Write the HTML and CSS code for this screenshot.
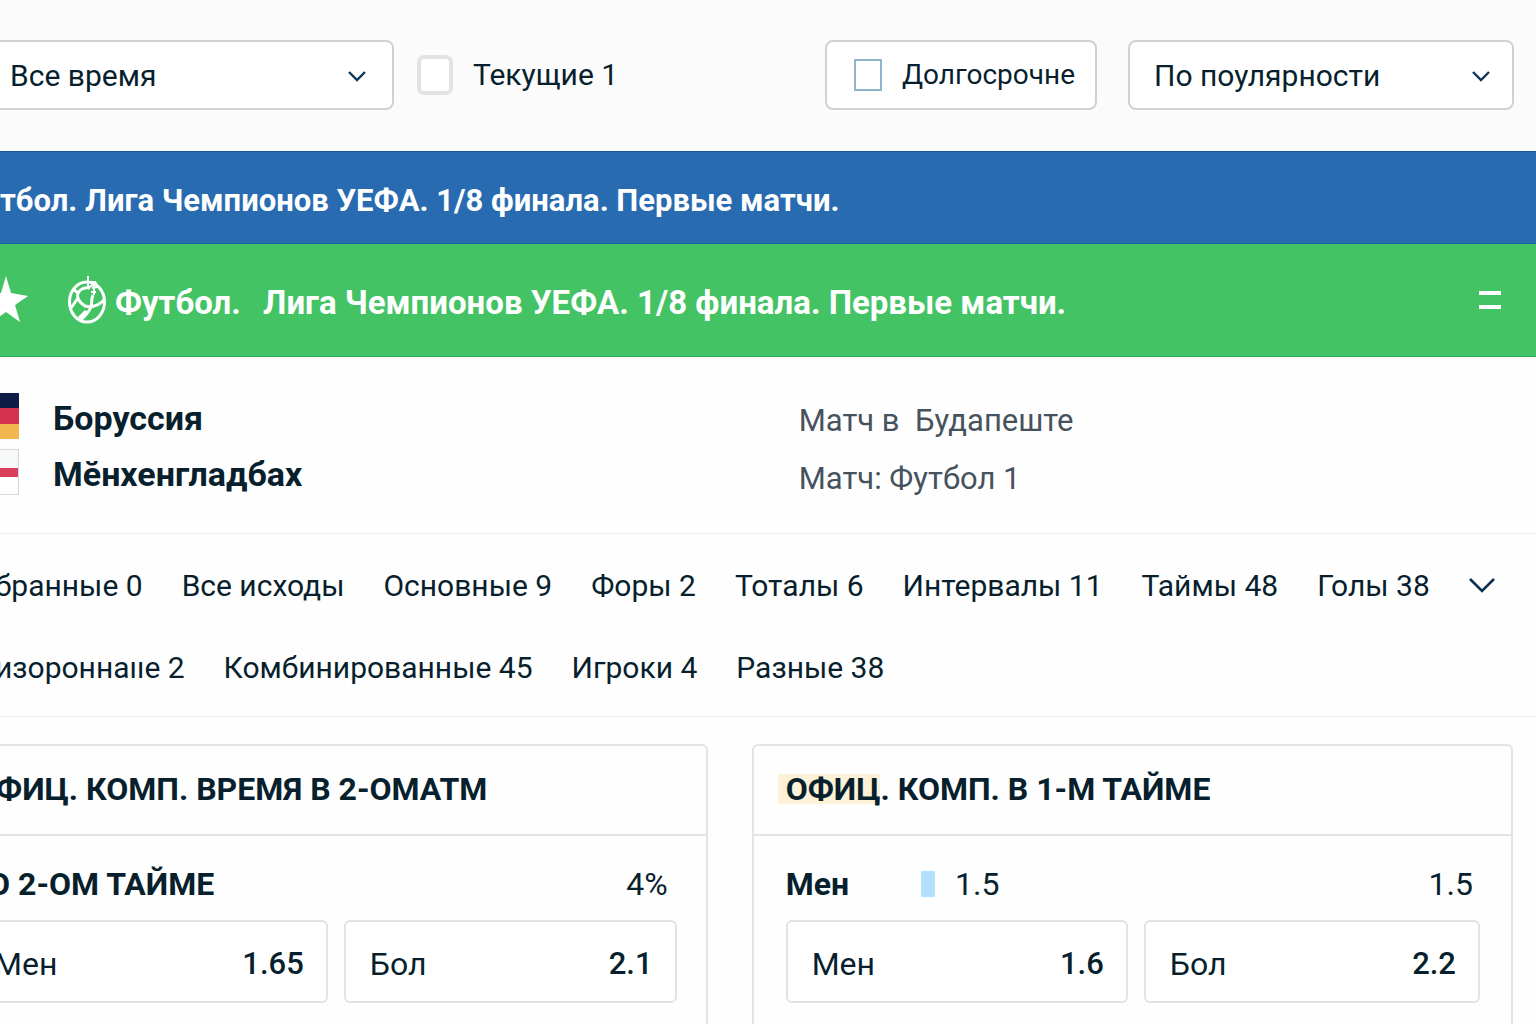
FILE: index.html
```html
<!DOCTYPE html>
<html lang="ru">
<head>
    <meta charset="UTF-8">
    <meta name="viewport" content="width=device-width, initial-scale=1.0">
    <title>Лига Чемпионов УЕФА</title>
    <link rel="stylesheet" href="styles.css">
</head>
<body>
    <form class="filters">
        <div class="select-box select-time">
            <select aria-label="Время">
                <option>Все время</option>
            </select>
            <svg class="chevron" viewBox="0 0 18 12"><path d="M1 2l8 8 8-8"/></svg>
        </div>
        <label class="check">
            <input type="checkbox">
            <span>Текущие 1</span>
        </label>
        <label class="check check-boxed">
            <input type="checkbox">
            <span>Долгосрочне</span>
        </label>
        <div class="select-box select-sort">
            <select aria-label="Сортировка">
                <option>По поулярности</option>
            </select>
            <svg class="chevron" viewBox="0 0 18 12"><path d="M1 2l8 8 8-8"/></svg>
        </div>
    </form>

    <div class="bar bar-blue">
        <h1>тбол. Лига Чемпионов УЕФА. 1/8 финала. Первые матчи.</h1>
    </div>

    <div class="bar bar-green">
        <button class="icon-button" aria-label="В избранное">
            <svg class="star" viewBox="0 0 28 48"><path d="M6 0L11 17L28 20L15 29L20 46L6 36L-8 46L-3 29L-16 20L1 17Z"/></svg>
        </button>
        <svg class="ball" viewBox="0 0 40 48">
            <ellipse cx="20" cy="26" rx="17.5" ry="20"/>
            <path d="M6 13L11 17M11 17C13 13 18 11 23 12M11 17C9 22 12 26 18 30C25 32 32 29 37 24M11 22L4 32M26 19C24 23 25 27 24 31C22 36 18 40 14 44M19 35L12 42"/>
            <path class="leaf" d="M21 0V11M17 6H29M22 11L30 7M25 12L30 11M27 10V19M24 16H29"/>
        </svg>
        <h2><span>Футбол.</span> <span>Лига Чемпионов УЕФА. 1/8 финала. Первые матчи.</span></h2>
        <button class="icon-button menu" aria-label="Меню">
            <svg viewBox="0 0 24 20"><path d="M1 3H23M1 17H23"/></svg>
        </button>
    </div>

    <section class="match">
        <div class="teams">
            <div class="team">
                <span class="flag flag-de"></span>
                <span>Боруссия</span>
            </div>
            <div class="team">
                <span class="flag flag-red"></span>
                <span>Мӗнхенгладбах</span>
            </div>
        </div>
        <div class="info">
            <p>Матч в&nbsp; Будапеште</p>
            <p>Матч: Футбол 1</p>
        </div>
    </section>

    <nav class="tabs">
        <div class="tab-row">
            <a href="#">бранные 0</a>
            <a href="#">Все исходы</a>
            <a href="#">Основные 9</a>
            <a href="#">Форы 2</a>
            <a href="#">Тоталы 6</a>
            <a href="#">Интервалы 11</a>
            <a href="#">Таймы 48</a>
            <a href="#">Голы 38</a>
            <button class="icon-button more" aria-label="Ещё">
                <svg viewBox="0 0 26 16"><path d="M1 1l12 12L25 1"/></svg>
            </button>
        </div>
        <div class="tab-row">
            <a href="#">изороннаııе 2</a>
            <a href="#">Комбинированные 45</a>
            <a href="#">Игроки 4</a>
            <a href="#">Разные 38</a>
        </div>
    </nav>

    <main class="panels">
        <section class="panel panel-left">
            <h3>ФИЦ. КОМП. ВРЕМЯ В 2-ОМАТМ</h3>
            <div class="line">
                <strong>О 2-ОМ ТАЙМЕ</strong>
                <span class="total">4%</span>
            </div>
            <div class="odds">
                <button class="odd"><span>Мен</span><b>1.65</b></button>
                <button class="odd"><span>Бол</span><b>2.1</b></button>
            </div>
        </section>
        <section class="panel panel-right">
            <h3><mark>ОФИЦ</mark>. КОМП. В 1-М ТАЙМЕ</h3>
            <div class="line">
                <strong>Мен</strong>
                <span class="mark-bar"></span>
                <span>1.5</span>
                <span class="total">1.5</span>
            </div>
            <div class="odds">
                <button class="odd"><span>Мен</span><b>1.6</b></button>
                <button class="odd"><span>Бол</span><b>2.2</b></button>
            </div>
        </section>
    </main>
</body>
</html>
```
FILE: styles.css
```css
* {
    box-sizing: border-box;
}

body {
    display: flex;
    flex-direction: column;
    min-height: 100vh;
    margin: 0;
    overflow-x: hidden;
    background: #fefefe;
    color: #081f2d;
    font-family: Roboto, "Liberation Sans", sans-serif;
    font-size: 32px;
    line-height: 40px;
}

h1, h2, h3, p {
    margin: 0;
}

button, select {
    font: inherit;
    color: inherit;
}

svg {
    display: block;
    fill: none;
    stroke: currentColor;
}

.icon-button {
    padding: 0;
    border: 0;
    background: none;
    cursor: pointer;
}

/* Filters */
.filters {
    display: flex;
    align-items: center;
    height: 151px;
    padding: 0 22px 2px 0;
    background: #fbfbfb;
    font-size: 30px;
}

.select-box {
    position: relative;
    flex: 0 1 386px;
}

.select-box select {
    appearance: none;
    display: block;
    width: 100%;
    height: 70px;
    padding: 2px 24px 0;
    border: 2px solid #cfd1d3;
    border-radius: 8px;
    background: #fff;
}

.select-time {
    flex-basis: 394px;
}

.select-time select {
    padding-left: 10px;
    border-left: 0;
    border-radius: 0 8px 8px 0;
}

.chevron {
    position: absolute;
    top: 30px;
    right: 24px;
    width: 18px;
    height: 12px;
    color: #0c3557;
    stroke-width: 2.4;
    pointer-events: none;
}

.select-time .chevron {
    right: 28px;
}

.check {
    display: flex;
    align-items: center;
    gap: 20px;
    margin-left: 23px;
    cursor: pointer;
}

.check input {
    appearance: none;
    width: 36px;
    height: 40px;
    margin: 0;
    border: 4px solid #e2e3e4;
    border-radius: 7px;
    background: #fff;
}

.check-boxed {
    height: 70px;
    margin: 0 31px 0 auto;
    padding: 0 20px 0 27px;
    border: 2px solid #cfd1d3;
    border-radius: 8px;
    background: #fff;
    font-size: 28px;
}

.check-boxed input {
    width: 28px;
    height: 32px;
    border: 2px solid #8db4cb;
    border-radius: 0;
}

/* League bars */
.bar {
    display: flex;
    align-items: center;
    color: #fff;
}

.bar h1, .bar h2 {
    padding-top: 6px;
    font-size: 31px;
    font-weight: 700;
    white-space: nowrap;
}

.bar h2 {
    font-size: 33px;
}

.bar-blue {
    height: 93px;
    border-top: 1px solid #175a98;
    border-bottom: 1px solid #17639a;
    background: #286bb0;
}

.bar-green {
    height: 113px;
    border-bottom: 1px solid #2faf55;
    background: #44c365;
}

.bar-green h2 span + span {
    margin-left: 14px;
}

.star {
    width: 28px;
    height: 48px;
    fill: #fff;
    stroke: none;
}

.ball {
    width: 40px;
    height: 48px;
    margin: 0 8px 0 39px;
    stroke-width: 3;
}

.ball .leaf {
    stroke-width: 2;
}

.menu {
    margin: 0 34px 0 auto;
}

.menu svg {
    width: 24px;
    height: 20px;
    stroke-width: 4;
}

/* Match */
.match {
    display: grid;
    grid-template-columns: 52% 1fr;
    height: 177px;
    padding-top: 31px;
    border-bottom: 1px solid #eeeff0;
}

.team {
    display: flex;
    align-items: center;
    gap: 34px;
    height: 56px;
    font-size: 34px;
    font-weight: 700;
    line-height: 44px;
}

.team span + span {
    padding-top: 4px;
}

.flag {
    width: 19px;
    height: 46px;
}

.flag-de {
    background: linear-gradient(#0d1d45 0 33%, #d4324f 33% 67%, #f2b64f 67%);
}

.flag-red {
    border: 1px solid #d5d7d8;
    border-width: 1px 1px 1px 0;
    background: linear-gradient(#f7f8f8 0 41%, #d93f58 41% 61%, #fff 61%);
}

.info {
    padding-top: 4px;
    color: #46525d;
    font-size: 31px;
}

.info p {
    height: 58px;
    line-height: 58px;
}

/* Tabs */
.tabs {
    height: 183px;
    padding-top: 11px;
    border-bottom: 1px solid #eeeff0;
}

.tab-row {
    display: flex;
    align-items: center;
    gap: 39px;
    height: 82px;
    margin-left: -5px;
    font-size: 30px;
    white-space: nowrap;
}

.tab-row a {
    color: inherit;
    text-decoration: none;
}

.more svg {
    width: 26px;
    height: 16px;
    color: #0c2f50;
    stroke-width: 2.6;
}

/* Panels */
.panels {
    display: flex;
    flex: 1;
    gap: 44px;
    padding: 27px 23px 0 0;
}

.panel {
    flex: 761 1 0;
    border: 2px solid #e3e4e6;
    border-bottom: 0;
    border-radius: 6px 6px 0 0;
}

.panel-left {
    flex-grow: 709;
    border-left: 0;
    border-top-left-radius: 0;
}

.panel h3 {
    height: 90px;
    padding-left: 32px;
    border-bottom: 2px solid #e3e4e6;
    font-size: 32px;
    font-weight: 700;
    line-height: 86px;
    white-space: nowrap;
}

.panel-left h3 {
    padding-left: 0;
    text-indent: -4px;
}

.panel mark {
    display: inline-block;
    margin-left: -8px;
    padding-left: 8px;
    background: #fdf1d8;
    color: inherit;
    line-height: 30px;
}

.line {
    display: flex;
    align-items: center;
    height: 84px;
    padding: 12px 38px 0 32px;
}

.panel-left .line {
    padding-left: 0;
    text-indent: -12px;
}

.mark-bar {
    width: 14px;
    height: 26px;
    margin: 0 20px 0 72px;
    background: #b3e1fc;
}

.total {
    margin-left: auto;
}

.odds {
    display: grid;
    grid-template-columns: 342fr 336fr;
    gap: 16px;
    padding: 0 31px 0 32px;
}

/* The first button of this panel runs past the left edge */
.panel-left .odds {
    grid-template-columns: 360fr 333fr;
    margin-left: -64px;
    padding-right: 29px;
}

.odd {
    display: flex;
    align-items: center;
    justify-content: space-between;
    height: 83px;
    padding: 4px 22px 0 24px;
    border: 2px solid #e1e2e4;
    border-radius: 6px;
    background: #fff;
    cursor: pointer;
}

.odd b {
    font-size: 31px;
    font-weight: 500;
}
```
